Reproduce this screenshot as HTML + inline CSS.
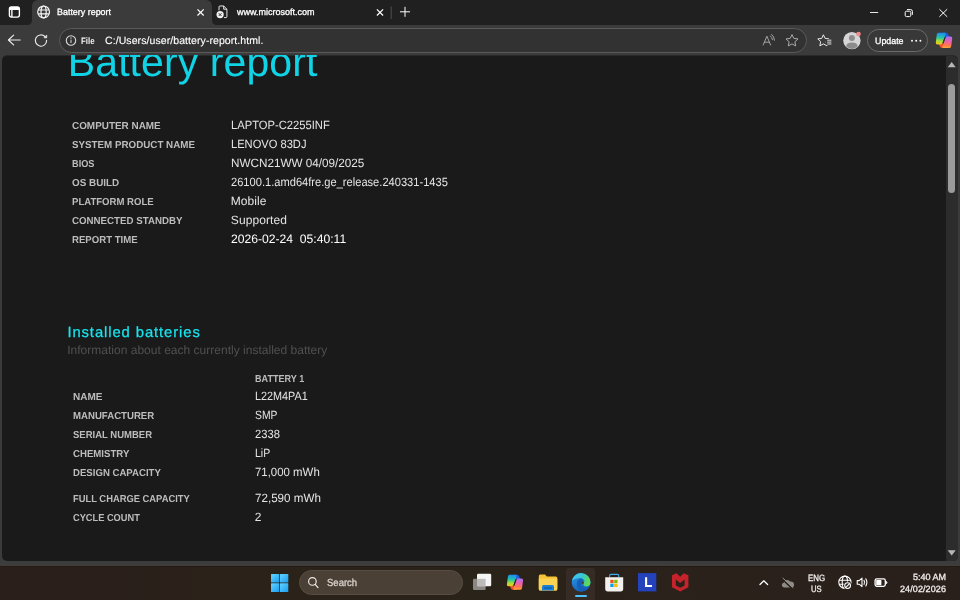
<!DOCTYPE html>
<html lang="en">
<head>
<meta charset="utf-8">
<title>Battery report</title>
<style>
html,body{margin:0;padding:0;width:960px;height:600px;overflow:hidden;background:#3b3b3b;}
body{font-family:"Liberation Sans",sans-serif;position:relative;}
.abs{position:absolute;}
.t{position:absolute;white-space:nowrap;display:block;text-rendering:geometricPrecision;}
#page,#chrometext{will-change:transform;}
.t{transform-origin:0 0;}
.bm{display:inline-block;width:0;height:0;}
#tabstrip{left:0;top:0;width:960px;height:25px;background:#202020;}
#tab1{left:32px;top:0;width:180px;height:25px;background:#3b3b3b;border-radius:6px 6px 0 0;}
#toolbar{left:0;top:25px;width:960px;height:31px;background:#3b3b3b;}
#addr{left:59px;top:28px;width:745.5px;height:23px;border-radius:12.5px;background:#323232;border:1px solid #5a5a5a;box-sizing:content-box;}
#upd{left:866.5px;top:29px;width:59.5px;height:21px;border-radius:11.5px;background:#383838;border:1px solid #6a6a6a;}
#content{left:2px;top:55px;width:955.5px;height:506px;border-top:1px solid #2a2a2a;box-sizing:border-box;background:#1a1a1a;border-radius:5px;overflow:hidden;}
#sbar{left:944px;top:-1px;width:11.5px;height:506px;background:#2c2c2c;}
#thumb{left:946px;top:27.8px;width:6.6px;height:109.2px;border-radius:3.5px;background:#9b9b9b;}
#strip{left:0;top:561px;width:960px;height:5px;background:linear-gradient(#3b3c3e 0,#3b3c3e 55%,#403c39 60%,#403c39 100%);}
#taskbar{left:0;top:565.5px;width:960px;height:34.5px;background:linear-gradient(90deg,#2a1f1b 0,#2a1f1b 10%,#2b2319 28%,#2a2319 50%,#2a211b 75%,#2a201b 100%);border-top:1px solid #241a15;box-sizing:border-box;}
#search{left:298.7px;top:570px;width:164.8px;height:25px;border-radius:12.5px;background:#4a4036;box-sizing:border-box;border:1px solid #574d42;}
#edgehl{left:566.3px;top:568px;width:29.2px;height:32px;border-radius:3px 3px 0 0;background:#362c25;}
#edgeind{left:575px;top:594.6px;width:11.8px;height:2.7px;border-radius:1.35px;background:#4cc2ff;}
#chrometext{left:0;top:0;width:960px;height:600px;}
#page{left:0;top:0;width:960px;height:600px;clip-path:inset(55.5px 14px 39.5px 2px);}
svg{position:absolute;left:0;top:0;overflow:visible;}
</style>
</head>
<body>
<div id="tabstrip" class="abs"></div>
<div id="tab1" class="abs"></div>
<div id="toolbar" class="abs"></div>
<div id="addr" class="abs"></div>
<div id="upd" class="abs"></div>
<div id="content" class="abs"><div id="sbar" class="abs"></div><div id="thumb" class="abs"></div></div>
<div id="strip" class="abs"></div>
<div id="taskbar" class="abs"></div>
<div id="search" class="abs"></div>
<div id="edgehl" class="abs"></div>
<div id="edgeind" class="abs"></div>
<svg width="960" height="600" viewBox="0 0 960 600">
<defs>
<linearGradient id="cp1" x1="0.3" y1="0" x2="0.2" y2="1">
<stop offset="0" stop-color="#1b8ff2"/><stop offset="0.4" stop-color="#25c6a6"/><stop offset="0.7" stop-color="#a6dc3c"/><stop offset="1" stop-color="#f8c616"/>
</linearGradient>
<linearGradient id="cp2" x1="0.7" y1="0" x2="0.6" y2="1">
<stop offset="0" stop-color="#a873f4"/><stop offset="0.45" stop-color="#ee5fae"/><stop offset="0.8" stop-color="#ff7a4a"/><stop offset="1" stop-color="#ffa53a"/>
</linearGradient>
<linearGradient id="edg1" x1="0.2" y1="0" x2="0.7" y2="1">
<stop offset="0" stop-color="#2f96e6"/><stop offset="1" stop-color="#0f5cb4"/>
</linearGradient>
<linearGradient id="edg2" x1="0" y1="0.3" x2="1" y2="0.6">
<stop offset="0" stop-color="#3fc4f2"/><stop offset="0.5" stop-color="#38c6cf"/><stop offset="0.85" stop-color="#58d862"/><stop offset="1" stop-color="#5fdc58"/>
</linearGradient>
<linearGradient id="win" x1="0" y1="0" x2="1" y2="1">
<stop offset="0" stop-color="#62d4ff"/><stop offset="1" stop-color="#1a9cf0"/>
</linearGradient>
</defs>
<!-- active tab lower inverse corners -->
<path d="M27 25 Q32 25 32 20 L32 25 Z" fill="#3b3b3b"/>
<path d="M217 25 Q212 25 212 20 L212 25 Z" fill="#3b3b3b"/>
<!-- tab actions icon -->
<g fill="none" stroke="#ffffff" stroke-width="1.35">
<rect x="9.4" y="7" width="10" height="10.1" rx="2"/>
<path d="M11.9 9.6 V17"/>
</g>
<path d="M9.4 9 Q9.4 7 11.4 7 H17.4 Q19.4 7 19.4 9 V9.9 H9.4 Z" fill="#ffffff"/>
<!-- globe favicon -->
<g fill="none" stroke="#f6f6f6" stroke-width="1.2">
<circle cx="43.6" cy="11.9" r="5.9"/>
<ellipse cx="43.6" cy="11.9" rx="2.6" ry="5.9"/>
<path d="M38.2 10 H49 M38.2 13.8 H49"/>
</g>
<!-- tab close x -->
<path d="M197.5 9.3 L203.7 15.5 M203.7 9.3 L197.5 15.5" stroke="#ffffff" stroke-width="1.2" fill="none"/>
<path d="M376.9 9.3 L383.1 15.5 M383.1 9.3 L376.9 15.5" stroke="#ffffff" stroke-width="1.2" fill="none"/>
<!-- tab2 favicon: page with error badge -->
<g transform="translate(-0.5 -0.6)">
<g fill="none" stroke="#f0f0f0" stroke-width="0.95" stroke-linejoin="round">
<path d="M219.5 11 V7.6 Q219.5 6.6 220.5 6.6 H224.2 L227.4 9.8 V17.2 Q227.4 18.2 226.4 18.2 H224.5"/>
<path d="M224.2 6.6 V9.8 H227.4"/>
</g>
<circle cx="220.6" cy="15.2" r="3.6" fill="#f0f0f0"/>
<path d="M219.2 13.8 L222 16.6 M222 13.8 L219.2 16.6" stroke="#222222" stroke-width="0.9"/>
</g>
<!-- separator + new tab -->
<path d="M391.2 6.5 V19" stroke="#5a5a5a" stroke-width="0.8"/>
<path d="M400 11.8 H410 M405 6.8 V16.8" stroke="#ffffff" stroke-width="1"/>
<!-- window controls -->
<path d="M870 12.5 H878.2" stroke="#ffffff" stroke-width="0.9"/>
<g fill="none" stroke="#ffffff" stroke-width="1">
<rect x="905.2" y="11.2" width="5.6" height="5.4" rx="1.3"/>
<path d="M907 9.6 H910.6 Q912.4 9.6 912.4 11.4 V14.8"/>
</g>
<path d="M939.4 9.2 L947.2 16.8 M947.2 9.2 L939.4 16.8" stroke="#ffffff" stroke-width="1"/>
<!-- back arrow -->
<path d="M8.4 40 H20.2 M13.6 35.1 L8.4 40 L13.6 44.9" stroke="#ececec" stroke-width="1.15" fill="none" stroke-linecap="round" stroke-linejoin="round"/>
<!-- refresh -->
<g fill="none" stroke="#ececec" stroke-width="1.15" stroke-linecap="round" stroke-linejoin="round">
<path d="M44.9 36.5 A5.65 5.65 0 1 0 46.6 40.3"/>
<path d="M46.7 35.5 V37.8 H44.4 Z" fill="#ececec" stroke-width="0.8"/>
</g>
<!-- info icon -->
<circle cx="71" cy="40.5" r="4.7" fill="none" stroke="#dcdcdc" stroke-width="1.1"/>
<path d="M71 39.6 V43" stroke="#d8d8d8" stroke-width="1"/>
<circle cx="71" cy="38" r="0.65" fill="#d8d8d8"/>
<!-- read aloud -->
<g fill="none" stroke="#a8a8a8" stroke-width="0.95" stroke-linecap="round" stroke-linejoin="round">
<path d="M763.2 45 L766.9 36.2 L770.6 45 M764.4 42.2 H769.4"/>
<path d="M770.4 36 Q772.3 37.4 772.5 39.8"/>
<path d="M771.6 34.4 Q774.4 36.6 774.5 40.2"/>
</g>
<!-- star -->
<path d="M792 34.6 L793.8 38.4 L798 38.9 L794.9 41.8 L795.7 45.9 L792 43.9 L788.3 45.9 L789.1 41.8 L786 38.9 L790.2 38.4 Z" fill="none" stroke="#b0b0b0" stroke-width="0.95" stroke-linejoin="round"/>
<!-- favorites -->
<path d="M823.4 34.8 L825.1 38.4 L829 38.9 L826.2 41.7 L826.9 45.8 L823.4 43.9 L819.9 45.8 L820.6 41.7 L817.8 38.9 L821.7 38.4 Z" fill="none" stroke="#f2f2f2" stroke-width="0.95" stroke-linejoin="round"/>
<rect x="826" y="39" width="6" height="6" fill="#3b3b3b"/>
<path d="M827.2 40.2 H831.4 M827.2 42.1 H831.4 M827.2 44 H831.4" stroke="#f2f2f2" stroke-width="0.9"/>
<!-- avatar -->
<circle cx="851.9" cy="40.6" r="8.7" fill="#d6d6d6"/>
<circle cx="851.9" cy="38" r="3" fill="#8c8c8c"/>
<path d="M846.2 46.6 Q846.2 42.4 851.9 42.4 Q857.6 42.4 857.6 46.6 Q855 49 851.9 49 Q848.8 49 846.2 46.6 Z" fill="#8c8c8c"/>
<circle cx="858.5" cy="34" r="2.3" fill="#f28b8b"/>
<!-- dots -->
<circle cx="912" cy="40.8" r="0.95" fill="#ffffff"/><circle cx="916.2" cy="40.8" r="0.95" fill="#ffffff"/><circle cx="920.4" cy="40.8" r="0.95" fill="#ffffff"/>
<!-- copilot toolbar -->
<g transform="translate(944 40.5)">
<g fill="#30302f">
<path d="M0.4 -7.7 H2 Q3.8 -7.7 4.4 -5.8 L5.2 -3.4 H2.2 Q0.6 -3.4 0.1 -1.8 L-0.2 -0.8 L-1.6 -7.7 Z" fill="#1a5fe0"/>
<path d="M-0.4 7.5 H-2 Q-3.8 7.5 -4.4 5.6 L-5.2 3.2 H-2.2 Q-0.6 3.2 -0.1 1.6 L0.2 0.6 L1.6 7.5 Z" fill="#f2502e"/>
<path d="M-5.6 -7.7 H0.8 Q2 -7.7 1.6 -6.4 L-1.3 2.4 Q-1.9 3.9 -3.5 3.9 H-6.4 Q-8.6 3.9 -8.2 1.7 L-7.2 -5.9 Q-6.9 -7.7 -5.6 -7.7 Z" fill="url(#cp1)"/>
<path d="M5.6 7.5 H-0.8 Q-2 7.5 -1.6 6.2 L1.3 -2.6 Q1.9 -4.1 3.5 -4.1 H6.4 Q8.6 -4.1 8.2 -1.9 L7.2 5.7 Q6.9 7.5 5.6 7.5 Z" fill="url(#cp2)"/>
<path d="M0.5 -3.3 L1.7 -3.3 L-0.5 3.1 L-1.7 3.1 Z"/>
</g>
</g>
<!-- scrollbar arrows -->
<path d="M947.7 67.2 L951.7 61.9 L955.7 67.2 Z" fill="#b8b8b8"/>
<path d="M947.7 550.2 L951.7 555.5 L955.7 550.2 Z" fill="#b8b8b8"/>
<!-- ===== taskbar ===== -->
<!-- windows logo -->
<g fill="url(#win)">
<rect x="271" y="574" width="8.3" height="8.6" rx="0.5"/>
<rect x="280" y="574" width="8.3" height="8.6" rx="0.5"/>
<rect x="271" y="583.3" width="8.3" height="8.6" rx="0.5"/>
<rect x="280" y="583.3" width="8.3" height="8.6" rx="0.5"/>
</g>
<!-- search icon -->
<circle cx="312.4" cy="581.4" r="3.8" fill="none" stroke="#f0ece8" stroke-width="1.15"/>
<path d="M315.2 584.4 L318 587.6" stroke="#f0ece8" stroke-width="1.2" stroke-linecap="round"/>
<!-- task view -->
<rect x="473" y="578.8" width="12.6" height="11.2" rx="1" fill="#8a8683"/>
<rect x="477" y="573.8" width="14.2" height="12.4" rx="1.2" fill="#f4f4f4"/>
<rect x="477" y="578.8" width="8.6" height="7.4" fill="#bdbbb9"/>
<!-- copilot taskbar -->
<g transform="translate(515 582.4) scale(0.98)">
<g fill="#2a2219">
<path d="M0.4 -7.7 H2 Q3.8 -7.7 4.4 -5.8 L5.2 -3.4 H2.2 Q0.6 -3.4 0.1 -1.8 L-0.2 -0.8 L-1.6 -7.7 Z" fill="#1a5fe0"/>
<path d="M-0.4 7.5 H-2 Q-3.8 7.5 -4.4 5.6 L-5.2 3.2 H-2.2 Q-0.6 3.2 -0.1 1.6 L0.2 0.6 L1.6 7.5 Z" fill="#f2502e"/>
<path d="M-5.6 -7.7 H0.8 Q2 -7.7 1.6 -6.4 L-1.3 2.4 Q-1.9 3.9 -3.5 3.9 H-6.4 Q-8.6 3.9 -8.2 1.7 L-7.2 -5.9 Q-6.9 -7.7 -5.6 -7.7 Z" fill="url(#cp1)"/>
<path d="M5.6 7.5 H-0.8 Q-2 7.5 -1.6 6.2 L1.3 -2.6 Q1.9 -4.1 3.5 -4.1 H6.4 Q8.6 -4.1 8.2 -1.9 L7.2 5.7 Q6.9 7.5 5.6 7.5 Z" fill="url(#cp2)"/>
<path d="M0.5 -3.3 L1.7 -3.3 L-0.5 3.1 L-1.7 3.1 Z"/>
</g>
</g>
<!-- file explorer -->
<path d="M538.8 576 Q538.8 574.5 540.3 574.5 H545 L546.8 576.4 H555.8 Q557.3 576.4 557.3 577.9 V589 Q557.3 590.6 555.8 590.6 H540.3 Q538.8 590.6 538.8 589 Z" fill="#f6c333"/>
<path d="M538.8 578.4 H557.3 V589 Q557.3 590.6 555.8 590.6 H540.3 Q538.8 590.6 538.8 589 Z" fill="#fbd354"/>
<path d="M542 586.6 Q542 585 543.6 585 H552.4 Q554 585 554 586.6 V590.6 H542 Z" fill="#1b7fd6"/>
<rect x="543.8" y="587.2" width="8.4" height="1.6" rx="0.8" fill="#0f5fae"/>
<!-- edge -->
<g>
<circle cx="581.1" cy="582.4" r="9.4" fill="url(#edg1)"/>
<path d="M571.9 580.6 A9.4 9.4 0 0 1 590.5 582.6 Q590.2 586.6 586.4 586.6 Q583.2 586.4 583.4 583.6 Q583.6 581.8 584.6 581 Q583.4 577.8 579.6 577.9 Q575 578 571.9 580.6 Z" fill="url(#edg2)"/>
<path d="M581.6 578.6 Q577.2 579 576.9 583.6 Q576.8 588.6 581.8 591.6 Q586.2 591.2 588.8 588 Q585.6 589.2 583 587.6 Q580.4 585.8 580.8 583 Q581.2 581.2 583 580.2 Z" fill="#155fb8"/>
<circle cx="582.6" cy="582.7" r="1.2" fill="#4a3a30"/>
</g>
<!-- store -->
<path d="M609.6 577.4 V575.8 Q609.6 574.4 611 574.4 H617.4 Q618.8 574.4 618.8 575.8 V577.4" fill="none" stroke="#3fa9e6" stroke-width="1.1"/>
<path d="M605.2 577.2 H623.2 V588.8 Q623.2 591.4 620.6 591.4 H607.8 Q605.2 591.4 605.2 588.8 Z" fill="#f3f1ee"/>
<rect x="610.3" y="579.8" width="3.3" height="3.3" fill="#f25022"/><rect x="614.2" y="579.8" width="3.3" height="3.3" fill="#7fba00"/>
<rect x="610.3" y="583.7" width="3.3" height="3.3" fill="#00a4ef"/><rect x="614.2" y="583.7" width="3.3" height="3.3" fill="#ffb900"/>
<!-- L app -->
<rect x="638" y="573.1" width="18.3" height="18.3" fill="#2342bc"/>
<path d="M646.1 577.2 V586 H652" fill="none" stroke="#ffffff" stroke-width="2.1"/>
<!-- mcafee -->
<path d="M672 575.2 L676.6 573.2 L680.2 576.8 L683.8 573.2 L688.4 575.2 V587.2 L680.2 591.6 L672 587.2 Z" fill="#c4232b"/>
<path d="M675.8 579.4 L680.2 583 L684.6 579.4 V585.4 L680.2 587.8 L675.8 585.4 Z" fill="#2b2019"/>
<!-- tray chevron -->
<path d="M760 584.5 L763.8 580.8 L767.6 584.5" fill="none" stroke="#ffffff" stroke-width="1.25" stroke-linecap="round" stroke-linejoin="round"/>
<!-- cloud off -->
<path d="M784.2 587.4 Q781.8 587.4 781.8 585.1 Q781.8 583.1 783.8 582.8 Q784.2 580 787.2 580 Q789.2 580 790.2 581.6 Q793.9 581.4 794.1 584.5 Q794.1 587.4 791.5 587.4 Z" fill="#8e8a86"/>
<path d="M782.2 579.2 L792.2 588.6" stroke="#2a211b" stroke-width="1.5"/>
<path d="M783 578.2 L793 587.6" stroke="#9a9692" stroke-width="1" stroke-linecap="round"/>
<!-- network globe -->
<g fill="none" stroke="#ffffff" stroke-width="1.1">
<circle cx="844.9" cy="582.2" r="6.1"/>
<ellipse cx="844.9" cy="582.2" rx="2.7" ry="6.1"/>
<path d="M839.2 580.2 H850.6 M839.2 584.2 H850.6"/>
</g>
<circle cx="847.6" cy="585.6" r="4.1" fill="#2a211b"/>
<circle cx="847.6" cy="585.6" r="2.9" fill="none" stroke="#ffffff" stroke-width="1.1"/>
<path d="M845.6 587.6 L849.6 583.6" stroke="#ffffff" stroke-width="1.1"/>
<!-- speaker -->
<g fill="none" stroke="#ffffff" stroke-width="1.1" stroke-linejoin="round" stroke-linecap="round">
<path d="M857.2 580.6 H859.2 L862 578.2 V586.6 L859.2 584.2 H857.2 Z"/>
<path d="M864 580.4 Q865.2 582.4 864 584.4"/>
<path d="M865.8 578.8 Q868 582.4 865.8 586"/>
</g>
<!-- battery -->
<rect x="875.1" y="578.9" width="10.2" height="7.4" rx="1.7" fill="none" stroke="#ffffff" stroke-width="1.3"/>
<rect x="876.2" y="580" width="5.2" height="5.2" rx="0.5" fill="#ffffff"/>
<path d="M886.3 581.2 V584 L887.2 582.6 Z" fill="#ffffff" stroke="#ffffff" stroke-width="0.6" stroke-linejoin="round"/>
</svg>

<div id="page" class="abs">
<span id="t0" class="t" style="left:67.80px;top:42.000px;font-size:41.00px;line-height:41.00px;font-weight:400;color:#11d3e6;letter-spacing:0.093px;">Battery report</span>
<span id="t1" class="t" style="left:72.30px;top:122.000px;font-size:10.10px;line-height:10.10px;font-weight:700;color:#bcbcbc;transform:scaleX(0.9823);">COMPUTER NAME</span>
<span id="t2" class="t" style="left:230.80px;top:119.000px;font-size:12.00px;line-height:12.00px;font-weight:400;color:#e4e4e4;transform:scaleX(0.9333);">LAPTOP-C2255INF</span>
<span id="t3" class="t" style="left:72.30px;top:141.000px;font-size:10.10px;line-height:10.10px;font-weight:700;color:#bcbcbc;transform:scaleX(0.9700);">SYSTEM PRODUCT NAME</span>
<span id="t4" class="t" style="left:230.80px;top:138.000px;font-size:12.00px;line-height:12.00px;font-weight:400;color:#e4e4e4;transform:scaleX(0.9273);">LENOVO 83DJ</span>
<span id="t5" class="t" style="left:72.30px;top:160.000px;font-size:10.10px;line-height:10.10px;font-weight:700;color:#bcbcbc;transform:scaleX(0.9100);">BIOS</span>
<span id="t6" class="t" style="left:230.80px;top:157.000px;font-size:12.00px;line-height:12.00px;font-weight:400;color:#e4e4e4;transform:scaleX(0.9756);">NWCN21WW 04/09/2025</span>
<span id="t7" class="t" style="left:72.30px;top:179.000px;font-size:10.10px;line-height:10.10px;font-weight:700;color:#bcbcbc;transform:scaleX(0.9794);">OS BUILD</span>
<span id="t8" class="t" style="left:230.80px;top:176.000px;font-size:12.00px;line-height:12.00px;font-weight:400;color:#e4e4e4;transform:scaleX(0.9262);">26100.1.amd64fre.ge_release.240331-1435</span>
<span id="t9" class="t" style="left:72.30px;top:198.000px;font-size:10.10px;line-height:10.10px;font-weight:700;color:#bcbcbc;transform:scaleX(0.9482);">PLATFORM ROLE</span>
<span id="t10" class="t" style="left:230.80px;top:195.000px;font-size:12.00px;line-height:12.00px;font-weight:400;color:#e4e4e4;letter-spacing:0.055px;">Mobile</span>
<span id="t11" class="t" style="left:72.30px;top:217.000px;font-size:10.10px;line-height:10.10px;font-weight:700;color:#bcbcbc;transform:scaleX(0.9623);">CONNECTED STANDBY</span>
<span id="t12" class="t" style="left:230.80px;top:214.000px;font-size:12.00px;line-height:12.00px;font-weight:400;color:#e4e4e4;letter-spacing:0.093px;">Supported</span>
<span id="t13" class="t" style="left:72.30px;top:236.000px;font-size:10.10px;line-height:10.10px;font-weight:700;color:#bcbcbc;transform:scaleX(0.9524);">REPORT TIME</span>
<span id="t14" class="t" style="left:230.90px;top:233.000px;font-size:12.30px;line-height:12.30px;font-weight:400;color:#ffffff;transform:scaleX(0.9872);">2026-02-24&nbsp;&nbsp;05:40:11</span>
<span id="t15" class="t" style="left:67.40px;top:326.000px;font-size:14.80px;line-height:14.80px;font-weight:400;color:#18e4ee;letter-spacing:0.912px;-webkit-text-stroke:0.25px;">Installed batteries</span>
<span id="t16" class="t" style="left:67.20px;top:344.000px;font-size:12.00px;line-height:12.00px;font-weight:400;color:#505050;letter-spacing:0.013px;">Information about each currently installed battery</span>
<span id="t17" class="t" style="left:254.60px;top:375.000px;font-size:10.10px;line-height:10.10px;font-weight:700;color:#bcbcbc;transform:scaleX(0.8980);">BATTERY 1</span>
<span id="t18" class="t" style="left:73.40px;top:393.000px;font-size:10.10px;line-height:10.10px;font-weight:700;color:#bcbcbc;transform:scaleX(0.9904);">NAME</span>
<span id="t19" class="t" style="left:254.80px;top:390.000px;font-size:12.00px;line-height:12.00px;font-weight:400;color:#e4e4e4;transform:scaleX(0.9012);">L22M4PA1</span>
<span id="t20" class="t" style="left:73.40px;top:412.000px;font-size:10.10px;line-height:10.10px;font-weight:700;color:#bcbcbc;transform:scaleX(0.9530);">MANUFACTURER</span>
<span id="t21" class="t" style="left:254.80px;top:409.000px;font-size:12.00px;line-height:12.00px;font-weight:400;color:#e4e4e4;transform:scaleX(0.8615);">SMP</span>
<span id="t22" class="t" style="left:73.40px;top:431.000px;font-size:10.10px;line-height:10.10px;font-weight:700;color:#bcbcbc;transform:scaleX(0.9419);">SERIAL NUMBER</span>
<span id="t23" class="t" style="left:254.80px;top:428.000px;font-size:12.00px;line-height:12.00px;font-weight:400;color:#e4e4e4;transform:scaleX(0.9326);">2338</span>
<span id="t24" class="t" style="left:73.40px;top:450.000px;font-size:10.10px;line-height:10.10px;font-weight:700;color:#bcbcbc;transform:scaleX(0.9539);">CHEMISTRY</span>
<span id="t25" class="t" style="left:254.80px;top:447.000px;font-size:12.00px;line-height:12.00px;font-weight:400;color:#e4e4e4;transform:scaleX(0.8766);">LiP</span>
<span id="t26" class="t" style="left:73.40px;top:469.000px;font-size:10.10px;line-height:10.10px;font-weight:700;color:#bcbcbc;transform:scaleX(0.9513);">DESIGN CAPACITY</span>
<span id="t27" class="t" style="left:254.80px;top:466.000px;font-size:12.00px;line-height:12.00px;font-weight:400;color:#e4e4e4;transform:scaleX(0.9516);">71,000 mWh</span>
<span id="t28" class="t" style="left:73.40px;top:495.000px;font-size:10.10px;line-height:10.10px;font-weight:700;color:#bcbcbc;transform:scaleX(0.9283);">FULL CHARGE CAPACITY</span>
<span id="t29" class="t" style="left:254.80px;top:492.000px;font-size:12.00px;line-height:12.00px;font-weight:400;color:#e4e4e4;transform:scaleX(0.9679);">72,590 mWh</span>
<span id="t30" class="t" style="left:73.40px;top:514.000px;font-size:10.10px;line-height:10.10px;font-weight:700;color:#bcbcbc;transform:scaleX(0.9168);">CYCLE COUNT</span>
<span id="t31" class="t" style="left:254.80px;top:511.000px;font-size:12.00px;line-height:12.00px;font-weight:400;color:#e4e4e4;">2</span>
</div>
<div id="chrometext" class="abs">
<span id="t32" class="t" style="left:57.10px;top:8.000px;font-size:9.10px;line-height:9.10px;font-weight:400;color:#ffffff;transform:scaleX(0.9808);-webkit-text-stroke:0.3px;">Battery report</span>
<span id="t33" class="t" style="left:236.99px;top:8.000px;font-size:9.10px;line-height:9.10px;font-weight:400;color:#ffffff;transform:scaleX(0.9906);-webkit-text-stroke:0.3px;">www.microsoft.com</span>
<span id="t34" class="t" style="left:80.60px;top:37.000px;font-size:9.30px;line-height:9.30px;font-weight:700;color:#f2f2f2;transform:scaleX(0.8457);">File</span>
<span id="t35" class="t" style="left:105.00px;top:36.000px;font-size:10.50px;line-height:10.50px;font-weight:400;color:#ffffff;letter-spacing:0.080px;-webkit-text-stroke:0.12px;">C:/Users/user/battery-report.html.</span>
<span id="t36" class="t" style="left:874.80px;top:37.000px;font-size:9.10px;line-height:9.10px;font-weight:400;color:#ffffff;transform:scaleX(0.9721);-webkit-text-stroke:0.3px;">Update</span>
<span id="t37" class="t" style="left:326.70px;top:579.000px;font-size:10.30px;line-height:10.30px;font-weight:400;color:#ddd6cf;transform:scaleX(0.9241);-webkit-text-stroke:0.3px;">Search</span>
<span id="t38" class="t" style="left:808.00px;top:574.000px;font-size:9.10px;line-height:9.10px;font-weight:400;color:#f0ecea;transform:scaleX(0.8659);-webkit-text-stroke:0.3px;">ENG</span>
<span id="t39" class="t" style="left:811.20px;top:585.000px;font-size:9.10px;line-height:9.10px;font-weight:400;color:#f0ecea;transform:scaleX(0.8435);-webkit-text-stroke:0.3px;">US</span>
<span id="t40" class="t" style="left:912.90px;top:573.000px;font-size:9.00px;line-height:9.00px;font-weight:400;color:#f0ecea;letter-spacing:0.013px;-webkit-text-stroke:0.3px;">5:40 AM</span>
<span id="t41" class="t" style="left:899.90px;top:585.000px;font-size:9.00px;line-height:9.00px;font-weight:400;color:#f0ecea;letter-spacing:0.118px;-webkit-text-stroke:0.3px;">24/02/2026</span>
</div>
</body>
</html>
